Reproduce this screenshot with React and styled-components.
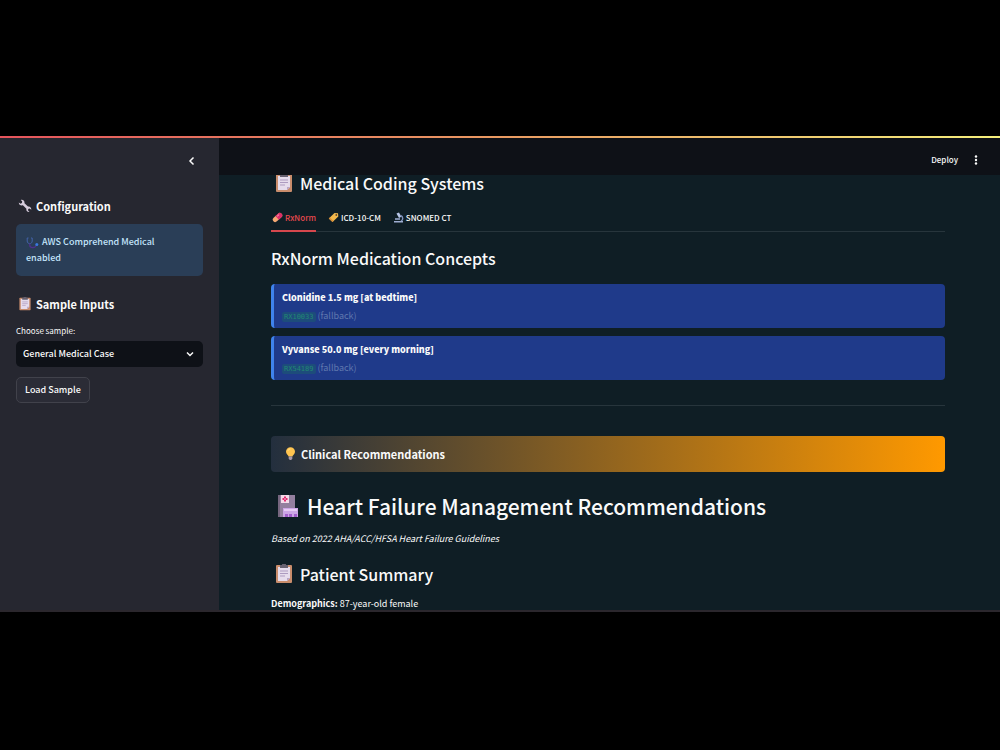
import React from 'react';
import styled, { createGlobalStyle, css } from 'styled-components';

const GlobalStyle = createGlobalStyle`
    * { box-sizing: border-box; }
    body {
        margin: 0;
        background-color: #000;
        color: #fafafa;
        font-family: "Noto Sans CJK SC", "Source Sans Pro", sans-serif;
        font-size: 9px;
        line-height: 16px;
    }
    h1, h2, h3, p { margin: 0; }
    button, select { font: inherit; color: inherit; }
`

const Stage = styled.div`
    min-height: 100vh;
    padding-bottom: 2px;
    display: flex;
    flex-direction: column;
    justify-content: center;
`

const Window_ = styled.div`
    height: calc(64vh - 4px);
    display: flex;
    flex-direction: column;
    overflow: hidden;
    border-bottom: 2px solid #2b272d;
`

const Decoration = styled.div`
    flex: none;
    height: 2px;
    background: linear-gradient(90deg, #e5545c, #e99a62 50%, #f5ef7c);
`

const Shell = styled.div`
    flex: 1;
    min-height: 0;
    display: grid;
    grid-template-columns: 219px 1fr;
`

const Sidebar = styled.aside`
    padding: 11px 16px;
    background-color: #262730;
    display: flex;
    flex-direction: column;
    .collapse {
        align-self: flex-end;
        width: 22px;
        height: 24px;
        margin-bottom: 5px;
        padding: 0;
        display: flex;
        align-items: center;
        justify-content: center;
        border: 0;
        background: none;
    }
`

const SideTitle = styled.h2`
    display: flex;
    align-items: center;
    gap: 4px;
    padding-left: 2px;
    margin-top: 16px;
    font-size: 11px;
    font-weight: 700;
    line-height: 24px;
`

const Notice = styled.div`
    margin-top: 6px;
    padding: 10px 24px 10px 10px;
    border-radius: 5px;
    background-color: #2a3e57;
    color: #c3e4fb;
    font-weight: 500;
    svg {
        vertical-align: middle;
        margin-right: 1px;
    }
`

const Field = styled.label`
    display: flex;
    flex-direction: column;
    margin-top: 7px;
    font-size: 8px;
    line-height: 16px;
`

const SelectBox = styled.span`
    margin-top: 2px;
    padding-right: 8px;
    display: flex;
    align-items: center;
    border-radius: 5px;
    background-color: #0e1117;
    select {
        flex: 1;
        height: 26px;
        padding: 0 7px;
        border: 0;
        appearance: none;
        background: none;
        font-size: 9px;
        font-weight: 500;
    }
`

const LoadButton = styled.button`
    align-self: flex-start;
    height: 26px;
    margin-top: 10px;
    padding: 0 8px;
    border: 1px solid #41424b;
    border-radius: 5px;
    background-color: #2b2c36;
    font-weight: 500;
`

const Main = styled.main`
    min-width: 0;
    min-height: 0;
    display: flex;
    flex-direction: column;
    overflow: hidden;
    background-color: #0f1e25;
`

const Toolbar = styled.header`
    flex: none;
    height: 37px;
    padding: 7px 18px 0 0;
    display: flex;
    justify-content: flex-end;
    align-items: center;
    gap: 12px;
    background-color: #0e1117;
    button {
        padding: 0;
        border: 0;
        background: none;
        font-size: 8px;
        font-weight: 500;
        display: flex;
        align-items: center;
    }
`

const Content = styled.div`
    flex: 1;
    min-height: 0;
    overflow: hidden;
    padding: 0 55px 0 52px;
`

const Heading = styled.h2`
    display: flex;
    align-items: center;
    gap: 6px;
    padding-left: ${props => props.$icon ? '3px' : '0'};
    font-size: 16px;
    font-weight: 500;
    line-height: 24px;
    ${props => props.$large && css`
        gap: 7px;
        padding-left: 5px;
        font-size: 21px;
        line-height: 32px;
    `}
`

const Section = styled.section`
    margin-top: ${props => props.$gap}px;
`

const Tabs = styled.div`
    display: flex;
    gap: 11px;
    border-bottom: 1px solid #27353c;
`

const Tab = styled.button`
    height: 28px;
    margin-bottom: -1px;
    padding: 1px 0 0 1px;
    display: flex;
    align-items: center;
    gap: 2px;
    border: 0;
    border-bottom: 2px solid ${props => props.$active ? '#d6474d' : 'transparent'};
    background: none;
    font-size: 8px;
    font-weight: 500;
    color: ${props => props.$active ? '#e8494e' : '#fafafa'};
`

const Concepts = styled.div`
    margin-top: 14px;
    display: grid;
    gap: 8px;
`

const Concept = styled.article`
    height: 44px;
    padding: 5px 8px 3px;
    border-left: 3px solid #3f83ec;
    border-radius: 4px;
    background-color: #1f3a8a;
    strong {
        display: block;
        font-weight: 900;
        line-height: 18px;
    }
    p {
        color: #5f78ae;
        line-height: 18px;
    }
    code {
        padding: 1px 2px;
        border-radius: 2px;
        background-color: #1d4c7b;
        color: #218873;
        font-family: "DejaVu Sans Mono", monospace;
        font-size: 7px;
    }
`

const Divider = styled.hr`
    margin: 25px 0 30px;
    border: 0;
    border-top: 1px solid #27353c;
`

const Banner = styled.h2`
    height: 36px;
    padding: 0 14px;
    display: flex;
    align-items: center;
    gap: 5px;
    border-radius: 4px;
    background: linear-gradient(90deg, #232f3e, #ff9900);
    font-size: 11px;
    font-weight: 700;
`

const Clipboard = ({ size }) => (
    <svg width={size} height={size} viewBox="0 0 20 20" aria-hidden="true">
        <rect x="2" y="1" width="16" height="18" rx="1" fill="#c98d6c" />
        <path d="M4 3h12v11l-3 3H4z" fill="#e6dcec" />
        <path d="M13 17v-3h3z" fill="#b9a6c9" />
        <path d="M6 7h8M6 9.500h8M6 12h5" stroke="#ad9bc0" strokeWidth="1" />
        <path d="M6 1h2a2 2 0 0 1 4 0h2v3H6z" fill="#66606f" />
    </svg>
)

const Wrench = () => (
    <svg width="14" height="14" viewBox="0 0 14 14" aria-hidden="true">
        <path d="M.8 3.400 2.500 4.700 3.900 4.100 4.200 2.500 2.800 1C5 .4 6.900 2 6.500 4.300L10 7.600c1.800-.4 3.500 1 3.300 3.200l-1.700-1.300-1.400.5-.1 1.500 1.400 1.500c-2 .4-3.700-1.300-3.100-3.300L4.900 6.300C2.800 6.900.7 5.500.8 3.400z" fill="#d6ccdc" />
    </svg>
)

const Stethoscope = () => (
    <svg width="13" height="12" viewBox="0 0 13 12" aria-hidden="true">
        <path d="M2.500 1H1.200v3c0 3.500 5 3.500 5 0V1H5" fill="none" stroke="#4263a8" />
        <path d="M3.700 6.500V8c0 3.500 6 3.500 6.500 0" fill="none" stroke="#50318d" strokeWidth="1.200" />
        <circle cx="10.800" cy="7.500" r="1.500" fill="#3979df" />
    </svg>
)

const Pill = () => (
    <svg width="11" height="11" viewBox="0 0 11 11" aria-hidden="true">
        <g transform="rotate(-42 5.500 5.500)">
            <rect x="0" y="3" width="11" height="5" rx="2.500" fill="#f5a873" />
            <path d="M5 3h3.500a2.500 2.500 0 0 1 0 5H5z" fill="#df2d68" />
            <path d="M6 4.400h2.500" stroke="#f68cad" strokeWidth="1" />
        </g>
    </svg>
)

const Tag = () => (
    <svg width="11" height="11" viewBox="0 0 11 11" aria-hidden="true">
        <path d="M6.500 1 10 1.200 10.300 4.500 4.500 10 .8 6.500z" fill="#f2b84b" />
        <path d="M.8 6.500 4.500 10l1-1-3.700-3.500z" fill="#d88b37" />
        <circle cx="8.300" cy="3" r=".9" fill="#5e4830" />
    </svg>
)

const Microscope = () => (
    <svg width="11" height="11" viewBox="0 0 11 11" aria-hidden="true">
        <path d="M3.500 1.500 6 .5l2.300 4.300-2.300 1.300z" fill="#b8c7e8" />
        <path d="M7.500 3.500c3 1 2.800 4.500.5 5.800" fill="none" stroke="#8192bd" strokeWidth="1.400" />
        <path d="M2 7h5M1 9.800h9" stroke="#9faed2" strokeWidth="1.500" />
    </svg>
)

const Bulb = () => (
    <svg width="11" height="14" viewBox="0 0 11 14" aria-hidden="true">
        <path d="M3.600 9.500C3.300 7.900 1 7.300 1 4.700a4.500 4.500 0 0 1 9 0c0 2.600-2.300 3.200-2.600 4.800z" fill="#ffc44f" />
        <path d="M3 3.500c.5-1 1.300-1.500 2.300-1.500" stroke="#ffe9a0" fill="none" />
        <path d="M3.700 9.500h3.600v2.300L6.200 13H4.800l-1.100-1.200z" fill="#a899a8" />
    </svg>
)

const Hospital = () => (
    <svg width="24" height="24" viewBox="0 0 24 24" aria-hidden="true">
        <path d="M2 1h17v22H2z" fill="#94809f" />
        <path d="M2 1h2v22H2z" fill="#76667f" />
        <path d="M5 1h8v8H5z" fill="#f5dbe9" />
        <path d="M9 2.500v5M6.500 5h5" stroke="#e32b70" strokeWidth="2" />
        <circle cx="9" cy="5" r=".8" fill="#f5dbe9" />
        <path d="M7 14h15v9H7z" fill="#cda6e6" />
        <path d="M8 16h13" stroke="#e8ccf5" strokeWidth="2" />
        <path d="M9 20h3v3H9zM13 20h3v3h-3zM18 20h3v3h-3z" fill="#a25fcb" />
    </svg>
)

const Chevron = ({ left }) => (
    <svg width="10" height="10" viewBox="0 0 10 10" aria-hidden="true">
        <path d={left ? 'M6.500 1.500 3 5l3.500 3.500' : 'M2 3.500l3 3 3-3'} fill="none" stroke="#fafafa" strokeWidth="1.500" />
    </svg>
)

const tabs = [
    { name: 'RxNorm', Icon: Pill },
    { name: 'ICD-10-CM', Icon: Tag },
    { name: 'SNOMED CT', Icon: Microscope },
]

const concepts = [
    { name: 'Clonidine 1.5 mg [at bedtime]', code: 'RX10033' },
    { name: 'Vyvanse 50.0 mg [every morning]', code: 'RX54189' },
]

export default function App() {
    const [active, setActive] = React.useState('RxNorm')

    return (
        <Stage>
            <GlobalStyle />
            <Window_>
                <Decoration />
                <Shell>
                    <Sidebar>
                        <button className="collapse" aria-label="Collapse sidebar"><Chevron left /></button>
                        <SideTitle><Wrench />Configuration</SideTitle>
                        <Notice><Stethoscope /> AWS Comprehend Medical enabled</Notice>
                        <SideTitle><Clipboard size={14} />Sample Inputs</SideTitle>
                        <Field>
                            Choose sample:
                            <SelectBox>
                                <select><option>General Medical Case</option></select>
                                <Chevron />
                            </SelectBox>
                        </Field>
                        <LoadButton>Load Sample</LoadButton>
                    </Sidebar>
                    <Main>
                        <Toolbar>
                            <button>Deploy</button>
                            <button aria-label="Menu">
                                <svg width="12" height="12" viewBox="0 0 12 12">
                                    <g fill="#fafafa">
                                        <circle cx="6" cy="2.500" r="1.200" />
                                        <circle cx="6" cy="6" r="1.200" />
                                        <circle cx="6" cy="9.500" r="1.200" />
                                    </g>
                                </svg>
                            </button>
                        </Toolbar>
                        <Content>
                            <Section $gap={-4}>
                                <Heading $icon><Clipboard size={20} />Medical Coding Systems</Heading>
                            </Section>
                            <Section $gap={9}>
                                <Tabs role="tablist">
                                    {tabs.map(({ name, Icon }) => (
                                        <Tab key={name} role="tab" aria-selected={active === name} $active={active === name} onClick={() => setActive(name)}>
                                            <Icon />{name}
                                        </Tab>
                                    ))}
                                </Tabs>
                            </Section>
                            <Section $gap={14}>
                                <Heading>RxNorm Medication Concepts</Heading>
                                <Concepts>
                                    {concepts.map(c => (
                                        <Concept key={c.code}>
                                            <strong>{c.name}</strong>
                                            <p><code>{c.code}</code> (fallback)</p>
                                        </Concept>
                                    ))}
                                </Concepts>
                            </Section>
                            <Divider />
                            <Banner><Bulb />Clinical Recommendations</Banner>
                            <Section $gap={18}>
                                <Heading as="h1" $icon $large><Hospital />Heart Failure Management Recommendations</Heading>
                            </Section>
                            <Section $gap={9}>
                                <p><em>Based on 2022 AHA/ACC/HFSA Heart Failure Guidelines</em></p>
                            </Section>
                            <Section $gap={15}>
                                <Heading $icon><Clipboard size={20} />Patient Summary</Heading>
                            </Section>
                            <Section $gap={10}>
                                <p><b>Demographics:</b> 87-year-old female</p>
                            </Section>
                        </Content>
                    </Main>
                </Shell>
            </Window_>
        </Stage>
    );
}
